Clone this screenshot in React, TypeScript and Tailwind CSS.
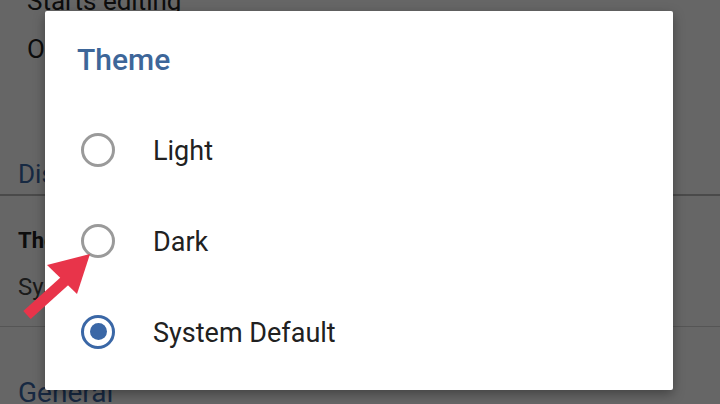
import React from "react";

const font = { fontFamily: "Roboto, 'Noto Sans', sans-serif" };

function Radio({ checked }: { checked?: boolean }) {
  return (
    <div className="w-[34px] h-[34px] shrink-0 flex items-center justify-center">
      {checked ? (
        <div className="w-[34px] h-[34px] rounded-full border-[3px] border-[#3a67a6] flex items-center justify-center">
          <div className="w-[17px] h-[17px] rounded-full bg-[#3a67a6]" />
        </div>
      ) : (
        <div className="w-[34px] h-[34px] rounded-full border-[3px] border-[#9a9a9a]" />
      )}
    </div>
  );
}

function Option({ label, checked }: { label: string; checked?: boolean }) {
  return (
    <div className="h-[91px] flex items-center pl-[36px] gap-[38px]">
      <Radio checked={checked} />
      <span className="text-[27px] text-[#212121] leading-none pt-[3px]">{label}</span>
    </div>
  );
}

export default function App() {
  return (
    <div className="relative w-[720px] h-[404px] overflow-hidden bg-white" style={font}>
      {/* underlying settings page */}
      <div className="flex flex-col">
        <div className="h-[26px] -mt-[12px] flex items-center pl-[27px] text-[26px] text-[#222] leading-none">
          Starts editing
        </div>
        <div className="h-[48px] mt-[11px] flex items-center pl-[27px] text-[26px] text-[#222] leading-none">
          Open last file
        </div>
        <div className="h-[60px] mt-[71px] flex items-center pl-[18px] text-[26px] text-[#3a67a6] leading-none">
          Display
        </div>
        <div className="h-[2px] -mt-[10px] bg-[#b8b8b8]" />
        <div className="h-[36px] mt-[27px] flex items-center pl-[18px] text-[22px] font-bold text-[#222] leading-none">
          Theme
        </div>
        <div className="h-[36px] mt-[10px] flex items-center pl-[18px] text-[24px] text-[#444] leading-none">
          System Default
        </div>
        <div className="h-[1px] mt-[21px] bg-[#d4d4d4]" />
        <div className="h-[40px] mt-[46px] flex items-center pl-[18px] text-[28px] text-[#3a67a6] leading-none">
          General
        </div>
      </div>

      {/* scrim */}
      <div className="absolute inset-0 bg-black/60" />

      {/* dialog */}
      <div className="absolute left-[45px] top-[11px] w-[628px] h-[379px] bg-white rounded-[2px] shadow-[0_4px_12px_rgba(0,0,0,0.35)] flex flex-col">
        <div className="pl-[32px] pt-[31px] h-[93px] text-[30px] font-medium text-[#3d6699] leading-[36px]">
          Theme
        </div>
        <Option label="Light" />
        <Option label="Dark" />
        <Option label="System Default" checked />
      </div>

      {/* red arrow annotation */}
      <svg className="absolute left-0 top-0" width="720" height="404" viewBox="0 0 720 404">
        <line x1="27" y1="315" x2="68" y2="278" stroke="#e8344a" strokeWidth="11" />
        <polygon points="90,254 47,265 77,294" fill="#e8344a" />
      </svg>
    </div>
  );
}
